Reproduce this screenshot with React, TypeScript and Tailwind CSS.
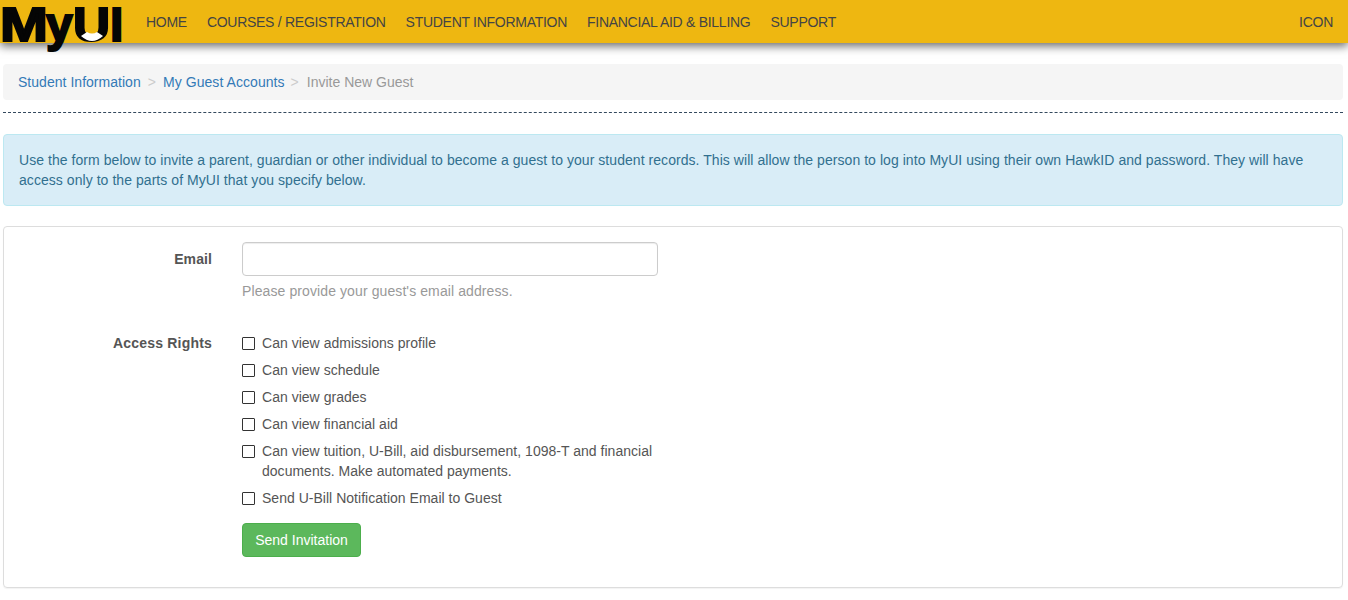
const font = "font-['Liberation_Sans',Arial,sans-serif]";

const navItems = ["Home", "Courses / Registration", "Student Information", "Financial Aid & Billing", "Support"];

const rights = [
  "Can view admissions profile",
  "Can view schedule",
  "Can view grades",
  "Can view financial aid",
  "Can view tuition, U-Bill, aid disbursement, 1098-T and financial documents. Make automated payments.",
  "Send U-Bill Notification Email to Guest",
];

function Logo() {
  return (
    <div className="relative h-[43px] w-[146px] shrink-0 text-[48px] font-bold leading-[50px] text-[#050505] [-webkit-text-stroke:2px_#050505]">
      <span className="absolute left-0 top-0 origin-left scale-x-[1.2]">M</span>
      <span className="absolute left-[46px] top-0">y</span>
      <span className="absolute left-[73px] top-0 origin-left scale-x-[1.07]">U</span>
      <span className="absolute left-[110px] top-0">I</span>
      <svg className="absolute left-[76px] top-[30px]" width="34" height="14" viewBox="0 0 34 14">
        <path d="M5 6 L11 2 Q16 5 21 2 L27 6 Q16 16 5 6 Z" fill="#fff" />
      </svg>
    </div>
  );
}

export default function App() {
  return (
    <div className={`${font} min-h-[600px] bg-white text-[14px] leading-5 text-[#333]`}>
      <header className="flex h-[43px] items-center bg-[#eeb711] pr-[15px] shadow-[0_3px_9px_rgba(0,0,0,0.6)]">
        <Logo />
        <nav className="flex gap-5 uppercase tracking-[-0.28px] text-[#444]">
          {navItems.map((item) => (
            <a key={item}>{item}</a>
          ))}
        </nav>
        <a className="ml-auto tracking-[-0.28px] text-[#444]">ICON</a>
      </header>

      <main className="px-[3px] pr-[5px] pt-[21px]">
        <div className="flex h-9 items-center rounded bg-[#f5f5f5] px-[15px]">
          <a className="tracking-[0.03px] text-[#337ab7]">Student Information</a>
          <span className="pl-[7px] pr-[7px] text-[#ccc]">&gt;</span>
          <a className="tracking-[0.06px] text-[#337ab7]">My Guest Accounts</a>
          <span className="pl-[6px] pr-[8px] text-[#ccc]">&gt;</span>
          <span className="text-[#999]">Invite New Guest</span>
        </div>

        <div className="mt-3 border-t border-dashed border-[#34495e]" />

        <div className="mt-[21px] rounded border border-[#bce8f1] bg-[#d9edf7] px-[15px] py-[15px] tracking-[0.053px] text-[#31708f]">
          Use the form below to invite a parent, guardian or other individual to become a guest to your student records. This will allow the person to log into MyUI using their own HawkID and password. They will have access only to the parts of MyUI that you specify below.
        </div>

        <form className="mt-5 h-[362px] rounded border border-[#ddd] pt-[15px] shadow-[0_1px_1px_rgba(0,0,0,0.05)]">
          <div className="flex">
            <label className="w-[208px] pt-[7px] text-right font-bold tracking-[0.1px] text-[#555]">Email</label>
            <div className="ml-[30px] w-[416px]">
              <input className="block h-[34px] w-full rounded border border-[#ccc] bg-white px-3 shadow-[inset_0_1px_1px_rgba(0,0,0,0.075)]" />
              <p className="mt-[5px] tracking-[0.1px] text-[#999]">Please provide your guest's email address.</p>
            </div>
          </div>

          <div className="mt-[32px] flex">
            <label className="w-[208px] text-right font-bold tracking-[0.2px] text-[#555]">Access Rights</label>
            <div className="ml-[30px] flex w-[416px] flex-col gap-[7px]">
              {rights.map((right) => (
                <label key={right} className="flex items-start tracking-[0.02px] text-[#555]">
                  <span className="mt-[4px] h-[13px] w-[13px] shrink-0 rounded-[1px] border border-[#333] bg-white" />
                  <span className="ml-[7px]">{right}</span>
                </label>
              ))}
              <button
                type="button"
                className="mt-[8px] h-[34px] w-[119px] rounded border border-[#4cae4c] bg-[#5cb85c] text-white"
              >
                Send Invitation
              </button>
            </div>
          </div>
        </form>
      </main>
    </div>
  );
}
